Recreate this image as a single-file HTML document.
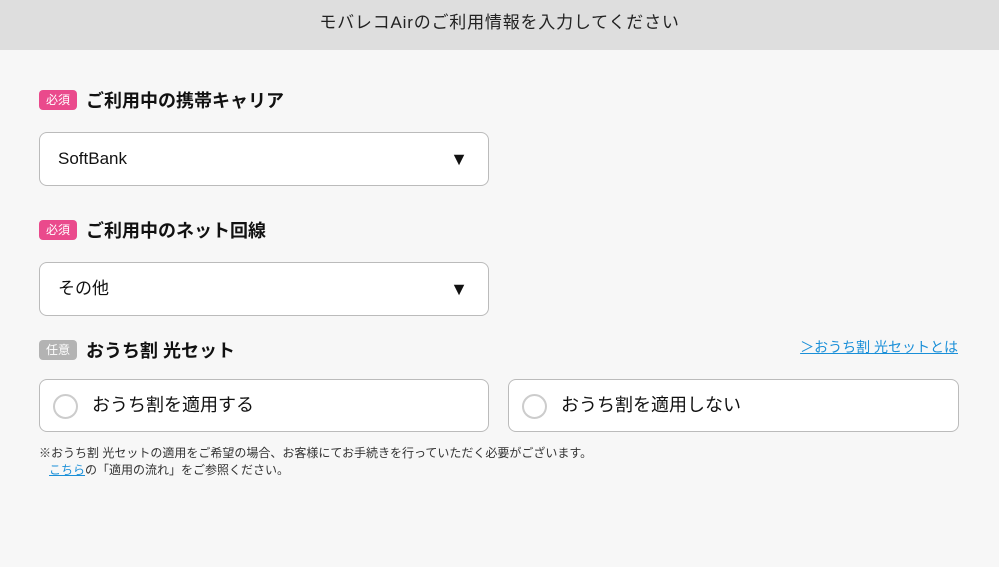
<!DOCTYPE html>
<html><head><meta charset="utf-8"><style>
*{box-sizing:border-box;margin:0;padding:0}
body{width:999px;height:567px;background:#f7f7f7;font-family:"Liberation Sans","Noto Sans CJK JP",sans-serif;color:#111;position:relative;overflow:hidden}
.hdr{position:absolute;left:0;top:0;width:999px;height:50px;background:#dedede;text-align:center;line-height:46px;font-size:17px;color:#222;letter-spacing:0.8px}
.lbl{position:absolute;left:39px;display:flex;align-items:center;font-size:18px;font-weight:bold;height:24px}
.tag{display:inline-block;width:38px;height:20px;border-radius:4px;color:#fff;font-size:12px;font-weight:normal;text-align:center;line-height:20px;margin-right:9px}
.req{background:#ea4a8c}.opt{background:#b3b3b3}
.sel{position:absolute;left:39px;width:450px;height:54px;background:#fff;border:1px solid #bbb;border-radius:8px;font-size:17px;line-height:52px;padding-left:18px}
.sel:after{content:"▼";position:absolute;right:20px;top:0;font-size:18px}
.rad{position:absolute;top:379px;width:451px;height:53px;background:#fff;border:1px solid #bbb;border-radius:8px;font-size:18px;line-height:51px;padding-left:52px}
.rad:before{content:"";position:absolute;left:13px;top:14px;width:21px;height:21px;border:2px solid #ccc;border-radius:50%}
.note{position:absolute;left:39px;top:445px;font-size:12px;color:#333;line-height:17px}
a{color:#1a8fd8}
</style></head><body>
<div class="hdr">モバレコAirのご利用情報を入力してください</div>
<div class="lbl" style="top:88px"><span class="tag req">必須</span>ご利用中の携帯キャリア</div>
<div class="sel" style="top:132px">SoftBank</div>
<div class="lbl" style="top:218px"><span class="tag req">必須</span>ご利用中のネット回線</div>
<div class="sel" style="top:262px">その他</div>
<div class="lbl" style="top:338px"><span class="tag opt">任意</span>おうち割 光セット</div>
<a style="position:absolute;right:41px;top:337px;font-size:14px;text-decoration:underline">＞おうち割 光セットとは</a>
<div class="rad" style="left:39px;width:450px">おうち割を適用する</div>
<div class="rad" style="left:508px">おうち割を適用しない</div>
<div class="note">※おうち割 光セットの適用をご希望の場合、お客様にてお手続きを行っていただく必要がございます。<br>&nbsp;&nbsp;&nbsp;<a style="text-decoration:underline">こちら</a>の「適用の流れ」をご参照ください。</div>
</body></html>
